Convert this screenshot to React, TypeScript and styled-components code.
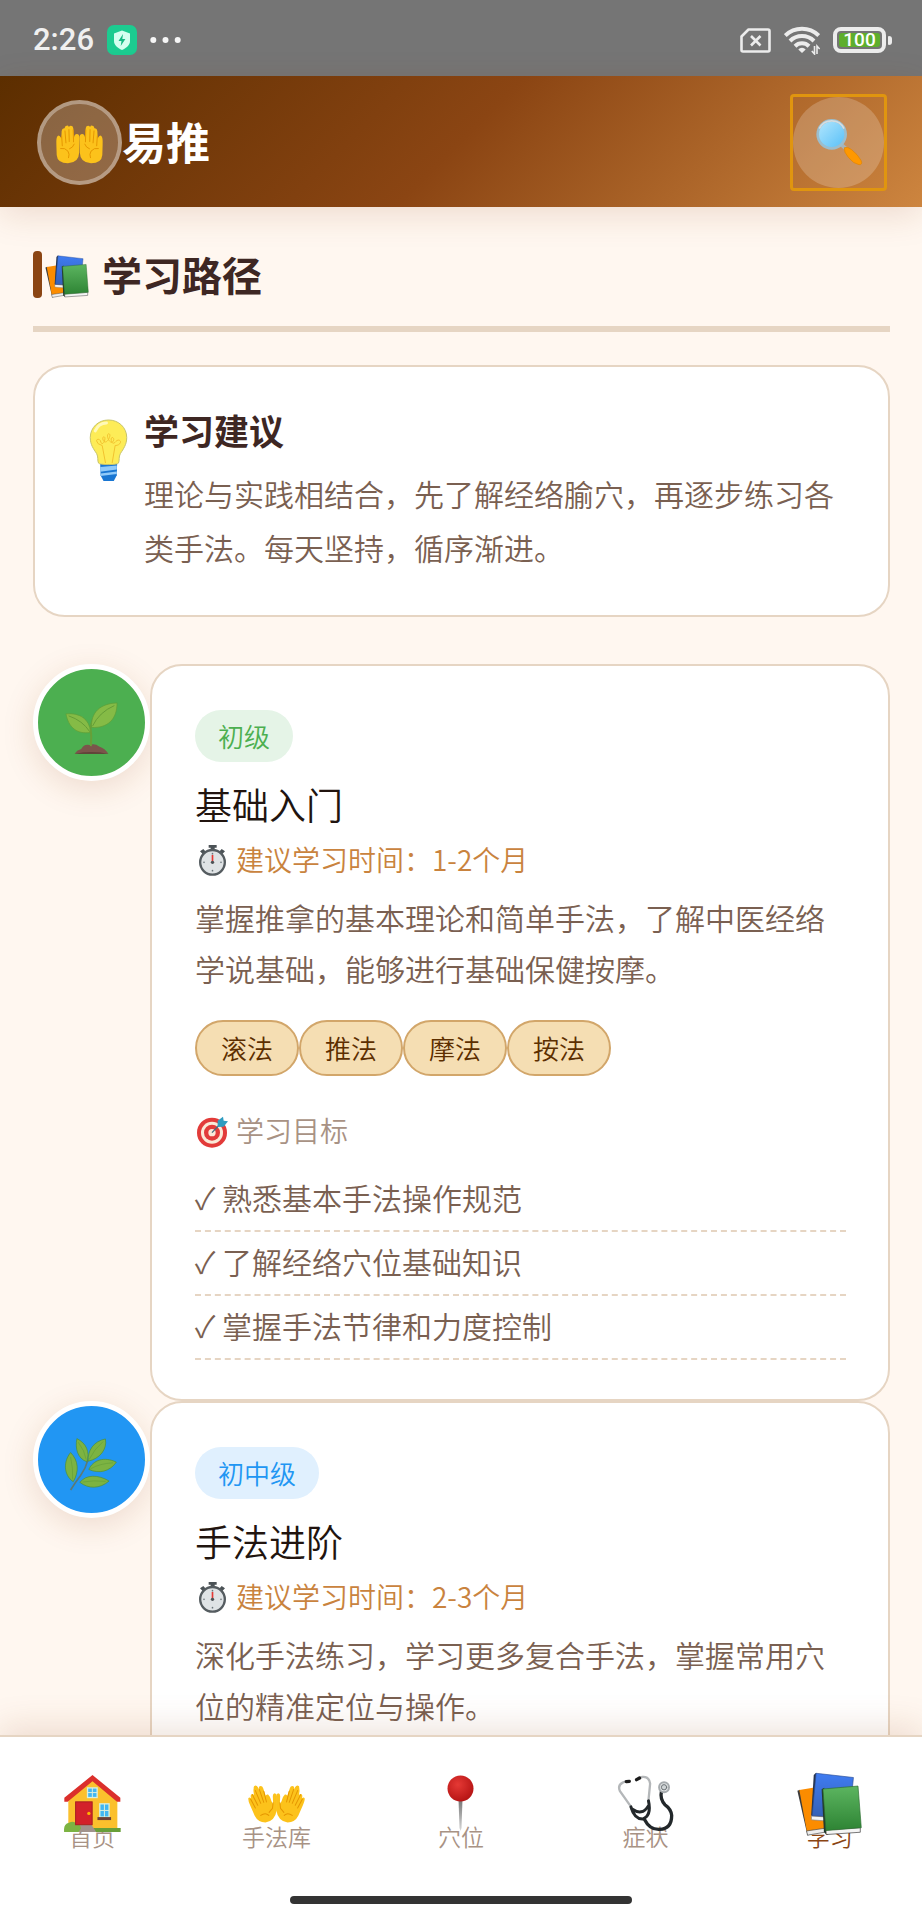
import React from "react";
import styled, { createGlobalStyle, css } from "styled-components";

const color = {
  ink: "#3e2723",
  heading: "#21140f",
  body: "#7a6051",
  muted: "#a89284",
  line: "#e6d5c3",
  brand: "#8b4513",
  accent: "#c9833e",
  paper: "#fff7f0",
};

const GlobalStyle = createGlobalStyle`
  *, *::before, *::after { box-sizing: border-box; }
  body {
    margin: 0;
    background: ${color.paper};
    color: ${color.body};
    font-family: "Noto Sans CJK SC", "Noto Sans", sans-serif;
    font-weight: 350;
  }
  h1, h2, h3, h4, p, ul { margin: 0; padding: 0; font-weight: inherit; }
  svg { display: block; flex: none; }
`;

/* ---------- shell ---------- */

const Shell = styled.div`
  display: flex;
  flex-direction: column;
  height: 100vh;
`;

const Scroller = styled.main`
  flex: 1;
  min-height: 0;
  overflow-y: auto;
  scrollbar-width: none;
  padding: 43px 32px 0 33px;
`;

/* ---------- status bar ---------- */

const StatusBar = styled.div`
  display: flex;
  align-items: center;
  justify-content: space-between;
  height: 76px;
  flex: none;
  padding: 4px 30px 0 33px;
  background: #757575;
  color: #f0f0f0;
`;

const StatusGroup = styled.div<{ $gap: number }>`
  display: flex;
  align-items: center;
  gap: ${(p) => p.$gap}px;
`;

const Clock = styled.time`
  font: 500 31px/40px Roboto, sans-serif;
`;

/* ---------- header ---------- */

const Header = styled.header`
  position: relative;
  z-index: 2;
  flex: none;
  display: flex;
  align-items: center;
  justify-content: space-between;
  padding: 21px 38px 19px 37px;
  background: linear-gradient(135deg, #5c2e00 0%, #8b4513 50%, #cd853f 100%);
  box-shadow: 0 8px 32px rgba(139, 69, 19, 0.15);
`;

const Brand = styled.div`
  display: flex;
  align-items: center;
`;

const BrandMark = styled.span`
  display: grid;
  place-items: center;
  width: 85px;
  height: 85px;
  padding-top: 4px;
  border: 4px solid rgba(255, 255, 255, 0.5);
  border-radius: 50%;
  background: rgba(255, 255, 255, 0.25);
  background-clip: padding-box;
`;

const BrandName = styled.h1`
  font-size: 44px;
  line-height: 52px;
  padding-bottom: 4px;
  font-weight: 700;
  color: #fff;
`;

const SearchButton = styled.button`
  display: grid;
  place-items: center;
  width: 91px;
  height: 91px;
  padding: 0;
  border: 0;
  border-radius: 50%;
  background: rgba(255, 255, 255, 0.2);
  position: relative;

  &::after {
    content: "";
    position: absolute;
    inset: -3px;
    border: 3px solid #e0950f;
    border-radius: 4px;
  }
`;

/* ---------- content ---------- */

const SectionTitle = styled.h2`
  display: flex;
  align-items: center;
  gap: 13px;
  padding-bottom: 28px;
  border-bottom: 6px solid ${color.line};
  font-size: 40px;
  line-height: 47px;
  font-weight: 700;
  color: ${color.ink};
`;

const TitleIcon = styled.span`
  display: flex;
  align-items: center;
  gap: 3px;

  &::before {
    content: "";
    width: 9px;
    height: 47px;
    border-radius: 4px;
    background: ${color.brand};
  }

  svg {
    margin-top: 5px;
  }
`;

const panel = css`
  border: 2px solid ${color.line};
  border-radius: 32px;
  background: #fff;
`;

const TipCard = styled.section`
  ${panel}
  display: flex;
  gap: 16px;
  margin-top: 33px;
  padding: 38px 42px 41px 54px;
`;

const TipIcon = styled.span`
  padding-top: 14px;
`;

const TipTitle = styled.h3`
  font-size: 35px;
  line-height: 50px;
  font-weight: 700;
  color: ${color.ink};
`;

const TipText = styled.p`
  margin-top: 11px;
  font-size: 30px;
  line-height: 54px;
`;

const Path = styled.div`
  margin-top: 47px;
`;

const Stage = styled.article`
  display: flex;
  align-items: flex-start;
`;

const StageNode = styled.span<{ $fill: string }>`
  display: grid;
  place-items: center;
  flex: none;
  width: 117px;
  height: 117px;
  border: 5px solid #fff;
  border-radius: 50%;
  background: ${(p) => p.$fill};
  box-shadow: 0 8px 32px rgba(139, 69, 19, 0.15);
`;

const StageCard = styled.div`
  ${panel}
  position: relative;
  flex: 1;
  min-width: 0;
  padding: 44px 42px 39px 43px;
`;

const Badge = styled.span<{ $fg: string; $bg: string }>`
  display: block;
  width: fit-content;
  padding: 0 23px;
  border-radius: 26px;
  font-size: 26px;
  line-height: 52px;
  color: ${(p) => p.$fg};
  background: ${(p) => p.$bg};
`;

const StageTitle = styled.h3`
  margin-top: 18px;
  font-size: 37px;
  line-height: 48px;
  color: ${color.heading};
`;

const IconLine = styled.div<{ $color: string; $top: number }>`
  display: flex;
  align-items: center;
  gap: 8px;
  margin-top: ${(p) => p.$top}px;
  font-size: 28px;
  line-height: 40px;
  color: ${(p) => p.$color};

  svg {
    margin-top: 2px;
  }
`;

const StageText = styled.p`
  margin-top: 13px;
  font-size: 30px;
  line-height: 51px;
`;

const Chips = styled.ul`
  display: flex;
  flex-wrap: wrap;
  margin-top: 26px;
  list-style: none;
`;

const Chip = styled.li`
  padding: 0 24px;
  border: 2px solid #d2a66a;
  border-radius: 28px;
  background: #f5deb3;
  font-size: 26px;
  line-height: 52px;
  color: #5c2e00;
`;

const Goals = styled.ul`
  margin-top: 18px;
  list-style: none;
`;

const Goal = styled.li`
  padding: 4px 0 8px;
  border-bottom: 2px dashed ${color.line};
  font-size: 30px;
  line-height: 50px;
`;

/* ---------- bottom navigation ---------- */

const Footer = styled.footer`
  position: relative;
  z-index: 2;
  flex: none;
  border-top: 2px solid ${color.line};
  padding: 38px 0 16px;
  background: #fff;
  box-shadow: 0 -8px 32px rgba(139, 69, 19, 0.15);
`;

const Tabs = styled.nav`
  display: grid;
  grid-template-columns: repeat(5, 1fr);
`;

const TabIcon = styled.span<{ $active: boolean }>`
  display: grid;
  place-items: center;
  height: 57px;
  position: relative;
  z-index: 1;
  ${(p) => p.$active && "transform: scale(1.15);"}
`;

const Tab = styled.a<{ $active: boolean }>`
  display: flex;
  flex-direction: column;
  align-items: center;
  font-size: 23px;
  line-height: 30px;
  text-decoration: none;
  color: ${(p) => (p.$active ? color.brand : color.muted)};
`;

const TabLabel = styled.span`
  margin-top: -11px;
`;

const HomeIndicator = styled.div`
  width: 37%;
  height: 8px;
  margin: 45px auto 0;
  border-radius: 4px;
  background: #333;
`;

/* ---------- icons ---------- */

const ShieldIcon = () => (
  <svg width="30" height="30" viewBox="0 0 30 30">
    <rect width="30" height="30" rx="7" fill="#1ccb90" />
    <path d="M15 5.500l8 3v7.500c0 4-3.400 7-8 9-4.600-2-8-5-8-9V8.500z" fill="#d5fff0" />
    <path d="M16 9l-4.500 7h3l-.8 5 4.700-7h-3.100z" fill="#16b883" />
  </svg>
);

const DotsIcon = () => (
  <svg width="31" height="8" viewBox="0 0 31 8" fill="#f6f6f6">
    <circle cx="3.300" cy="4" r="3" />
    <circle cx="15.500" cy="4" r="3" />
    <circle cx="27.700" cy="4" r="3" />
  </svg>
);

const NoSimIcon = () => (
  <svg width="31" height="25" viewBox="0 0 31 25" fill="none" stroke="#ececec" strokeWidth="2.600">
    <path d="M8.500 1.500h19.500q1.500 0 1.500 1.500v19q0 1.500-1.500 1.500H3Q1.500 23.500 1.500 22V8.500z" strokeLinejoin="round" />
    <path d="M11 8l9.500 9.500M20.500 8L11 17.500" />
  </svg>
);

const WifiIcon = () => (
  <svg width="36" height="29" viewBox="0 0 36 29" fill="none" stroke="#ececec" strokeWidth="4">
    <path d="M1.300 9.500a24 24 0 0 1 33.400 0" />
    <path d="M6 15a17 17 0 0 1 24 0" />
    <path d="M11 20.200a10 10 0 0 1 14 0" />
    <path d="M14.300 23.400a5 5 0 0 1 7.400 0L18 27z" fill="#ececec" stroke="none" />
    <path d="M30.500 20v8l-2.700-3M33 28v-8l2.700 3" strokeWidth="1.600" />
  </svg>
);

const BatteryBody = styled.span`
  display: flex;
  align-items: center;
  gap: 2px;

  &::after {
    content: "";
    width: 4px;
    height: 9px;
    border-radius: 1px 3px 3px 1px;
    background: #ececec;
  }
`;

const BatteryCell = styled.span`
  display: grid;
  width: 53px;
  height: 26px;
  padding: 2px;
  border: 4px solid #ececec;
  border-radius: 8px;
`;

const BatteryLevel = styled.span`
  display: grid;
  place-items: center;
  border-radius: 3px;
  background: #5eae2c;
  font: 500 19px/14px Roboto, sans-serif;
  color: #fff;
`;

const PalmsIcon = () => (
  <svg width="47" height="39" viewBox="168 376 142 118">
    <defs>
      <g id="palm">
        <path d="M173 409q-5 3-4 26l1 32q2 25 34 25 33-2 34-32l1-45q0-12-8-12-7 0-8 10l-3-28q-1-7-7-7-4 0-6 4-2-5-7-4-6 1-6 8-8-1-9 8l-1 22q-6-11-11-7z" fill="#fcc21b" />
        <path d="M185 409l2 30M195 394l3 36M207 390l1 36M220 391l1 36M223 434q-4 11-14 14M182 447q13-3 22 8 6 9 2 20" fill="none" stroke="#e59600" strokeWidth="3" strokeLinecap="round" />
      </g>
    </defs>
    <use href="#palm" />
    <use href="#palm" transform="translate(478 0) scale(-1 1)" />
  </svg>
);

const SearchIcon = () => (
  <svg width="50" height="50" viewBox="1057 351 150 150">
    <defs>
      <linearGradient id="lens" x1="0" y1="0" x2="1" y2="1">
        <stop offset="0" stopColor="#b5e7fd" />
        <stop offset="1" stopColor="#55bff8" />
      </linearGradient>
    </defs>
    <path d="M1140 432l16 14" stroke="#a8b4ba" strokeWidth="11" />
    <path d="M1148 440q10-4 22 6 18 14 28 32 6 14-6 13-16-2-32-22-14-16-12-29z" fill="#ff9800" stroke="#e08300" strokeWidth="2" />
    <circle cx="1110" cy="400" r="42" fill="url(#lens)" stroke="#9cbdcc" strokeWidth="8" />
    <path d="M1073 383a41 41 0 0 1 74 0" fill="none" stroke="#d4dde1" strokeWidth="5" />
  </svg>
);

const BooksIcon = ({ width, height }: { width: number; height: number }) => (
  <svg width={width} height={height} viewBox="1008 214 200 194">
    <defs>
      <linearGradient id="green" x1="0" y1="0" x2="0" y2="1">
        <stop offset="0" stopColor="#5cb560" />
        <stop offset="1" stopColor="#2e8434" />
      </linearGradient>
      <linearGradient id="blue" x1="0" y1="0" x2="0" y2="1">
        <stop offset="0" stopColor="#3f7cf2" />
        <stop offset="1" stopColor="#3560b4" />
      </linearGradient>
    </defs>
    <path d="M1010 270l8-3 32 136-9 4z" fill="#3b3b3b" />
    <path d="M1016 268l78-13 20 130-75 10z" fill="#fb8c00" />
    <path d="M1038 393l55-8v12l-52 9z" fill="#eee" stroke="#444" strokeWidth="2" />
    <path d="M1060 222l6-6 6 4-14 130-6-4z" fill="#26334d" />
    <path d="M1053 347l50 4v12l-50-4z" fill="#f4f4f4" stroke="#888" strokeWidth="2" />
    <path d="M1067 217l114 13-12 122-114-5z" fill="url(#blue)" stroke="#2d4f94" strokeWidth="2" />
    <path d="M1084 266l8-5 8 130-2 13-7-8z" fill="#22382b" />
    <path d="M1097 390l105-7v14l-104 7z" fill="#f5f5f5" stroke="#333" strokeWidth="2" />
    <path d="M1088 265l107-9 10 127-108 9z" fill="url(#green)" stroke="#2b6b30" strokeWidth="2" />
  </svg>
);

const BulbIcon = () => (
  <svg width="39" height="63" viewBox="266 232 116 190">
    <path d="M299 368h51l-1 34-9 17h-31l-9-17z" fill="#1976d2" />
    <path d="M299 377l50-5v12l-50 7zM300 396l49-6v8l-49 6z" fill="#90caf9" />
    <path d="M324 235c-31 0-55 23-55 53 0 22 10 34 19 48 6 10 2 22 6 29 3 6 57 6 60 0 4-8 0-19 6-29 9-14 19-27 19-48 0-30-24-53-55-53z" fill="#fdec57" stroke="#c6c36a" strokeWidth="3" />
    <path d="M284 268q10-24 34-24" fill="none" stroke="#fff9b8" strokeWidth="9" strokeLinecap="round" />
    <path d="M315 365l-10-53q-16-4-17-14c0-8 12-6 13 4 4 12 14-4 12-14-3-6-9 0-5 8 6 12 16 2 20-12 2-10-8-10-7 0 2 14 12 24 18 14 4-10-6-14-7-6 0 12 6 18 14 8 6-8 16-4 14 3-2 5-7 9-16 9l-9 53" fill="none" stroke="#f2c22e" strokeWidth="3" />
  </svg>
);

const SproutIcon = () => (
  <svg width="65" height="65" viewBox="177 145 196 196">
    <path d="M224 337q6-10 20-14 8-16 26-12 14-6 28 4 18 6 28 22z" fill="#7b554b" />
    <path d="M224 337q50-9 102 0z" fill="#5a3b33" />
    <path d="M273 314q3-30-1-56 6-28 20-40" fill="none" stroke="#689f38" strokeWidth="6" />
    <path d="M272 273c-40 6-66-14-74-56 40-4 72 14 74 56z" fill="#85bb46" stroke="#5e9c35" strokeWidth="2" />
    <path d="M275 258c-2-46 26-72 77-74 0 50-28 76-77 74z" fill="#85bb46" stroke="#5e9c35" strokeWidth="2" />
    <path d="M206 223q42 14 64 48M344 192q-46 20-66 62" fill="none" stroke="#659d36" strokeWidth="3" />
  </svg>
);

const HerbIcon = () => (
  <svg width="65" height="65" viewBox="177 140 196 196">
    <path d="M212 330q16-26 30-44 16-22 22-46" fill="none" stroke="#5c7a76" strokeWidth="5" />
    <g fill="#7cb342" stroke="#4e8d33" strokeWidth="2">
      <path d="M231 175c28 14 40 40 30 70-28-10-36-40-30-70z" />
      <path d="M317 176c6 32-18 60-52 67-2-32 16-60 52-67z" />
      <path d="M350 246c-20 28-52 36-83 22 12-28 46-40 83-22z" />
      <path d="M212 217c24 24 26 58 8 88-30-20-30-62-8-88z" />
      <path d="M328 303c-28 24-62 24-88 4 18-24 56-24 88-4z" />
    </g>
    <path d="M235 186q20 26 24 52M310 184q-28 24-42 54M340 248q-40 2-68 18M212 230q8 36 6 68M318 304q-38-4-70 2" fill="none" stroke="#649f38" strokeWidth="2" />
  </svg>
);

const StopwatchIcon = () => (
  <svg width="33" height="33" viewBox="585 610 99 99">
    <path d="M626 613h24v8h-6v10h-12v-10h-6z" fill="#4b5256" />
    <path d="M600 632l10-7 8 9-8 8zM675 632l-10-7-8 9 8 8z" fill="#4b5256" />
    <circle cx="637.500" cy="665" r="37" fill="#dfe3e5" stroke="#555c60" strokeWidth="7" />
    <g fill="#6b757a">
      <circle cx="637.500" cy="639" r="2.500" />
      <circle cx="637.500" cy="690" r="2.500" />
      <circle cx="612" cy="665" r="2.500" />
      <circle cx="663" cy="665" r="2.500" />
    </g>
    <path d="M637.500 643v20" stroke="#e53935" strokeWidth="5" />
    <circle cx="637.500" cy="665" r="5" fill="#4b5256" />
  </svg>
);

const TargetIcon = () => (
  <svg width="33" height="33" viewBox="0 0 99 99">
    <circle cx="51" cy="53" r="45" fill="#e23b39" />
    <circle cx="51" cy="53" r="33" fill="#fbe9d7" />
    <circle cx="51" cy="53" r="24" fill="#e23b39" />
    <circle cx="51" cy="53" r="11" fill="#fbe9d7" />
    <path d="M51 53l26-28" stroke="#456a80" strokeWidth="4" />
    <path d="M68 36l0-19L84 5l2 12 13 2-13 16z" fill="#2f9cc0" />
  </svg>
);

const HouseIcon = () => (
  <svg width="57" height="57" viewBox="192 224 170 172">
    <path d="M204 296l73-62 75 62v92H204z" fill="#fbc02d" />
    <path d="M192 386q6-2 12-2h158v12H192z" fill="#689f38" />
    <path d="M232 374h42l14 22h-70z" fill="#a1938d" />
    <path d="M192 396q-4-24 14-28 14-6 22 2 14 2 14 16l-8 10z" fill="#7cb342" />
    <path d="M192 305v-12l85-69 84 69v12h-10l-74-62-75 62z" fill="#db2f2b" />
    <rect x="226" y="305" width="50" height="69" fill="#d3212a" stroke="#a81e22" strokeWidth="3" />
    <circle cx="266" cy="340" r="5" fill="#ffb300" />
    <rect x="262" y="263" width="29" height="29" fill="#42b6f2" stroke="#d9efdf" strokeWidth="4" />
    <path d="M276.500 263v29M262 277h29" stroke="#d9efdf" strokeWidth="3" />
    <rect x="299" y="311" width="28" height="40" fill="#42b6f2" stroke="#d9efdf" strokeWidth="4" />
    <path d="M313 311v40M299 331h28" stroke="#d9efdf" strokeWidth="3" />
    <rect x="292" y="351" width="41" height="9" fill="#6d4037" />
  </svg>
);

const OpenHandsIcon = () => (
  <svg width="57" height="38" viewBox="746 254 170 112">
    <defs>
      <g id="openhand">
        <path d="M763 263q-1-7 5-8 5 0 8 6l5 12-3-10q0-7 6-7 5 0 7 6l8 24q1-6 7-4 7 6 10 20l5 8-1-24q0-8 6-8 6 1 6 10v40q-6 34-34 37-22 0-32-20l-14-32q-6-14-5-20 3-5 8 0-3-12 3-13 4 0 6 3-3-14-1-20z" fill="#fcc21b" />
        <path d="M768 270l16 38M780 267l13 38M759 282l16 32M793 272l8 32M754 296l14 26M821 306l-2 17q-4 4-10 12M784 344q14-10 24 0" fill="none" stroke="#e59600" strokeWidth="3" strokeLinecap="round" />
      </g>
    </defs>
    <use href="#openhand" />
    <use href="#openhand" transform="translate(1662 0) scale(-1 1)" />
  </svg>
);

const PinIcon = () => (
  <svg width="57" height="57" viewBox="0 0 57 57">
    <defs>
      <linearGradient id="needle" x1="0" y1="0" x2="0" y2="1">
        <stop offset="0" stopColor="#757575" />
        <stop offset="1" stopColor="#d8d8d8" />
      </linearGradient>
      <radialGradient id="ball" cx="0.400" cy="0.350" r="0.650">
        <stop offset="0" stopColor="#e53935" />
        <stop offset="1" stopColor="#b71515" />
      </radialGradient>
    </defs>
    <path d="M26.500 24h4l-1 29-1 3-1-3z" fill="url(#needle)" />
    <circle cx="28.500" cy="13.500" r="13" fill="url(#ball)" />
  </svg>
);

const StethoscopeIcon = () => (
  <svg width="57" height="57" viewBox="470 226 170 172" fill="none" strokeLinecap="round">
    <path d="M510 320l-32-45q-8-18 8-26l10-4M564 302l5-50q-3-22-24-20l-8 3" stroke="#b4b7b9" strokeWidth="7" />
    <path d="M497 246l9-1M528 240l9-5" stroke="#1c1c1c" strokeWidth="10" />
    <path d="M511 322q10 36 35 37 28-10 18-55M513 328q32 22 50-8" stroke="#23282b" strokeWidth="9" />
    <path d="M552 360q16 32 46 30 36-2 36-42-2-20-20-32-16-18-11-40" stroke="#23282b" strokeWidth="10" />
    <circle cx="611" cy="263" r="15" fill="#e0e3e4" stroke="#a6abae" strokeWidth="6" />
    <circle cx="611" cy="263" r="8" fill="#cfd4d6" stroke="#6c7276" strokeWidth="3" />
  </svg>
);

/* ---------- data ---------- */

interface StageData {
  level: string;
  fg: string;
  bg: string;
  node: string;
  icon: React.ReactNode;
  title: string;
  time: string;
  text: string;
  skills?: string[];
  goals?: string[];
}

const stages: StageData[] = [
  {
    level: "初级",
    fg: "#4caf50",
    bg: "#e5f4e7",
    node: "#4caf50",
    icon: <SproutIcon />,
    title: "基础入门",
    time: "建议学习时间：1-2个月",
    text: "掌握推拿的基本理论和简单手法，了解中医经络学说基础，能够进行基础保健按摩。",
    skills: ["滚法", "推法", "摩法", "按法"],
    goals: ["熟悉基本手法操作规范", "了解经络穴位基础知识", "掌握手法节律和力度控制"],
  },
  {
    level: "初中级",
    fg: "#2196f3",
    bg: "#e0f0fe",
    node: "#2196f3",
    icon: <HerbIcon />,
    title: "手法进阶",
    time: "建议学习时间：2-3个月",
    text: "深化手法练习，学习更多复合手法，掌握常用穴位的精准定位与操作。",
  },
];

const tabs = [
  { label: "首页", href: "#home", icon: <HouseIcon /> },
  { label: "手法库", href: "#techniques", icon: <OpenHandsIcon /> },
  { label: "穴位", href: "#acupoints", icon: <PinIcon /> },
  { label: "症状", href: "#symptoms", icon: <StethoscopeIcon /> },
  { label: "学习", href: "#learn", icon: <BooksIcon width={57} height={56} />, active: true },
];

export default function App() {
  return (
    <Shell>
      <GlobalStyle />
      <StatusBar>
        <StatusGroup $gap={13}>
          <Clock>2:26</Clock>
          <ShieldIcon />
          <DotsIcon />
        </StatusGroup>
        <StatusGroup $gap={13}>
          <NoSimIcon />
          <WifiIcon />
          <BatteryBody>
            <BatteryCell>
              <BatteryLevel>100</BatteryLevel>
            </BatteryCell>
          </BatteryBody>
        </StatusGroup>
      </StatusBar>

      <Header>
        <Brand>
          <BrandMark>
            <PalmsIcon />
          </BrandMark>
          <BrandName>易推</BrandName>
        </Brand>
        <SearchButton type="button" aria-label="搜索">
          <SearchIcon />
        </SearchButton>
      </Header>

      <Scroller>
        <SectionTitle>
          <TitleIcon>
            <BooksIcon width={44} height={43} />
          </TitleIcon>
          学习路径
        </SectionTitle>

        <TipCard>
          <TipIcon>
            <BulbIcon />
          </TipIcon>
          <div>
            <TipTitle>学习建议</TipTitle>
            <TipText>理论与实践相结合，先了解经络腧穴，再逐步练习各类手法。每天坚持，循序渐进。</TipText>
          </div>
        </TipCard>

        <Path>
          {stages.map((s) => (
            <Stage key={s.title}>
              <StageNode $fill={s.node}>{s.icon}</StageNode>
              <StageCard>
                <Badge $fg={s.fg} $bg={s.bg}>
                  {s.level}
                </Badge>
                <StageTitle>{s.title}</StageTitle>
                <IconLine $color={color.accent} $top={11}>
                  <StopwatchIcon />
                  {s.time}
                </IconLine>
                <StageText>{s.text}</StageText>
                {s.skills && (
                  <Chips>
                    {s.skills.map((k) => (
                      <Chip key={k}>{k}</Chip>
                    ))}
                  </Chips>
                )}
                {s.goals && (
                  <>
                    <IconLine $color={color.muted} $top={34}>
                      <TargetIcon />
                      学习目标
                    </IconLine>
                    <Goals>
                      {s.goals.map((g) => (
                        <Goal key={g}>✓ {g}</Goal>
                      ))}
                    </Goals>
                  </>
                )}
              </StageCard>
            </Stage>
          ))}
        </Path>
      </Scroller>

      <Footer>
        <Tabs>
          {tabs.map((t) => (
            <Tab key={t.label} href={t.href} $active={!!t.active}>
              <TabIcon $active={!!t.active}>{t.icon}</TabIcon>
              <TabLabel>{t.label}</TabLabel>
            </Tab>
          ))}
        </Tabs>
        <HomeIndicator />
      </Footer>
    </Shell>
  );
}
